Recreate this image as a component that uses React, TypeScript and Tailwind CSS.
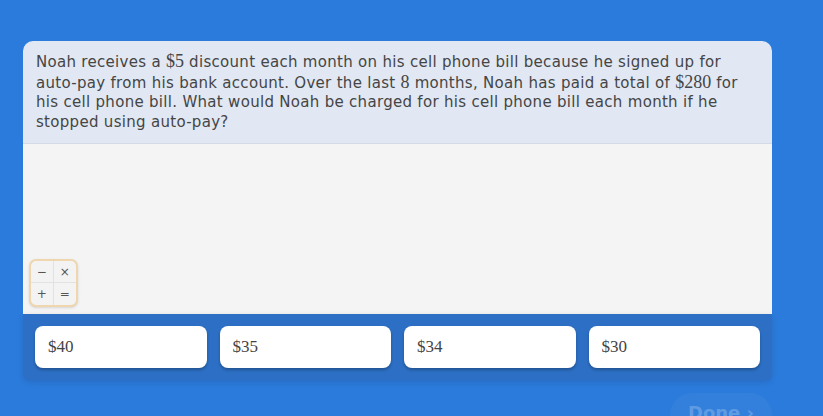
const ANSWERS = ['$40', '$35', '$34', '$30'];

function M({ children }: { children: React.ReactNode }) {
  return (
    <span className="text-[18px] tracking-normal" style={{ fontFamily: '"Liberation Serif", "DejaVu Serif", serif' }}>
      {children}
    </span>
  );
}

export default function App() {
  return (
    <div className="min-h-screen bg-[#2b7bdc] pt-[41px] pl-[23px]" style={{ fontFamily: '"DejaVu Sans", "Noto Sans", sans-serif' }}>
      <div className="w-[749px]">
        {/* question card */}
        <div className="rounded-t-[10px] overflow-hidden">
          <div className="bg-[#e1e8f3] border-b border-[#d5dbe4] px-[13px] pt-[11px] pb-[13px] h-[103px]">
            <p className="text-[15px] leading-[19.5px] text-[#454545] tracking-[0.3px] whitespace-nowrap">
              Noah receives a <M>$5</M> discount each month on his cell phone bill because he signed up for
              <br />
              auto-pay from his bank account. Over the last <M>8</M> months, Noah has paid a total of <M>$280</M> for
              <br />
              his cell phone bill. What would Noah be charged for his cell phone bill each month if he
              <br />
              stopped using auto-pay?
            </p>
          </div>
          <div className="bg-[#f4f4f4] h-[170px] flex items-end px-[6px] pb-[7px]">
            <div className="w-[49px] h-[48px] rounded-[7px] border-2 border-[#f0d6ae] bg-[#f3f3f3] grid grid-cols-2 grid-rows-2 text-[12px] text-[#555] shadow-sm">
              <div className="flex items-center justify-center border-r border-b border-[#e2e2e2]">−</div>
              <div className="flex items-center justify-center border-b border-[#e2e2e2]">×</div>
              <div className="flex items-center justify-center border-r border-[#e2e2e2]">+</div>
              <div className="flex items-center justify-center">=</div>
            </div>
          </div>
        </div>

        {/* answers */}
        <div className="bg-[#2c6fc4] rounded-b-[6px] p-[12px] grid grid-cols-4 gap-[13px] shadow-[0_2px_6px_rgba(0,0,0,0.12)]">
          {ANSWERS.map((a) => (
            <button
              key={a}
              className="h-[42px] bg-white rounded-[8px] text-left pl-[13px] text-[17px] text-[#444] shadow-[0_2px_3px_rgba(0,0,0,0.25)]"
              style={{ fontFamily: '"Liberation Serif", "DejaVu Serif", serif' }}
            >
              {a}
            </button>
          ))}
        </div>

        {/* done */}
        <div className="flex justify-end mt-[13px]">
          <button className="w-[102px] h-[44px] rounded-full bg-[#3380dc] text-[#5f9be3] text-[18px] font-semibold pt-[6px] flex justify-center">
            Done ›
          </button>
        </div>
      </div>
    </div>
  );
}
